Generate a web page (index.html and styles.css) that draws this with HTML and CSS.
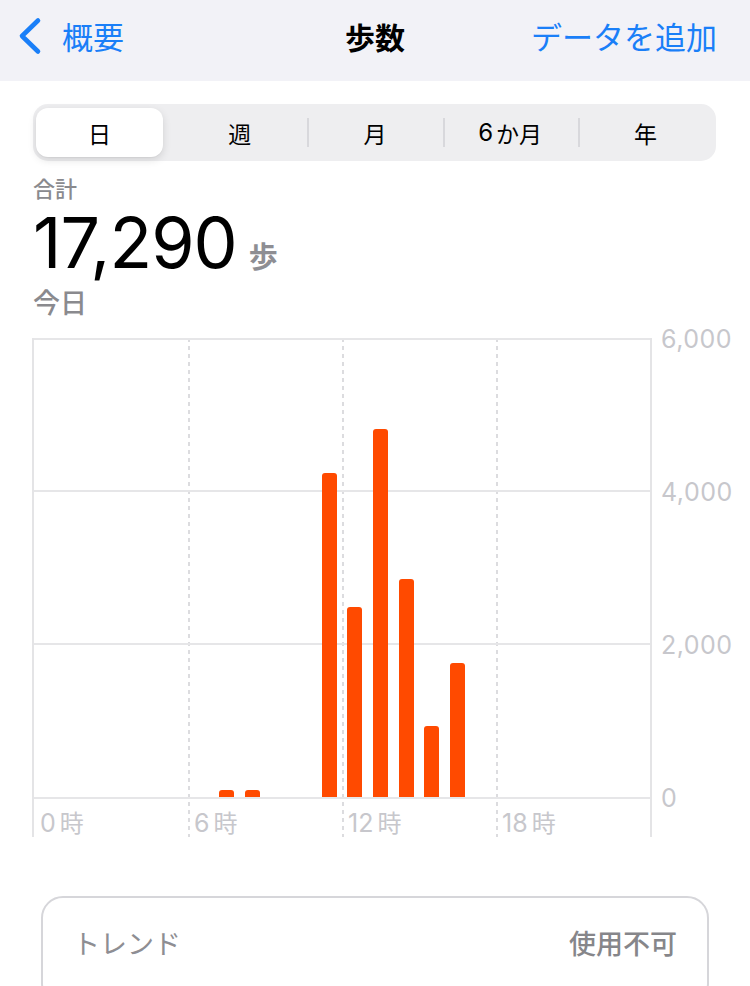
FILE: index.html
```html
<!DOCTYPE html>
<html lang="ja">
<head>
    <meta charset="UTF-8">
    <meta name="viewport" content="width=device-width, initial-scale=1.0">
    <title>歩数</title>
    <link rel="stylesheet" href="styles.css">
</head>
<body>

    <div class="nav">
        <div class="nav_back">
            <svg class="chevron" viewBox="0 0 24 38" width="24" height="38">
                <polyline points="20,3.5 4,19 20,34.5" fill="none" stroke="#1a7ff8" stroke-width="4.6" stroke-linecap="round" stroke-linejoin="round"/>
            </svg>
            <span>概要</span>
        </div>
        <div class="nav_title">歩数</div>
        <div class="nav_add">データを追加</div>
    </div>

    <div class="content">
        <div class="segment">
            <div class="seg_item active">日</div>
            <div class="seg_item">週</div>
            <div class="seg_item sep">月</div>
            <div class="seg_item sep"><span class="seg_num">6</span>か月</div>
            <div class="seg_item sep">年</div>
        </div>

        <div class="summary">
            <div class="label">合計</div>
            <div class="total"><span class="num">17,290</span><span class="unit">歩</span></div>
            <div class="date">今日</div>
        </div>

        <div class="chart">
            <div class="plot">
                <!-- 0時〜5時 -->
                <div class="quarter">
                    <div class="hours">
                        <div class="slot"></div><div class="slot"></div><div class="slot"></div>
                        <div class="slot"></div><div class="slot"></div><div class="slot"></div>
                    </div>
                    <div class="xlabel"><span class="xnum">0</span>時</div>
                </div>
                <!-- 6時〜11時 -->
                <div class="quarter">
                    <div class="hours">
                        <div class="slot"></div>
                        <div class="slot"><div class="bar" style="height:7px"></div></div>
                        <div class="slot"><div class="bar" style="height:7px"></div></div>
                        <div class="slot"></div>
                        <div class="slot"></div>
                        <div class="slot"><div class="bar" style="height:324px"></div></div>
                    </div>
                    <div class="xlabel"><span class="xnum">6</span>時</div>
                </div>
                <!-- 12時〜17時 -->
                <div class="quarter">
                    <div class="hours">
                        <div class="slot"><div class="bar" style="height:190px"></div></div>
                        <div class="slot"><div class="bar" style="height:368px"></div></div>
                        <div class="slot"><div class="bar" style="height:218px"></div></div>
                        <div class="slot"><div class="bar" style="height:71px"></div></div>
                        <div class="slot"><div class="bar" style="height:134px"></div></div>
                        <div class="slot"></div>
                    </div>
                    <div class="xlabel"><span class="xnum">12</span>時</div>
                </div>
                <!-- 18時〜23時 -->
                <div class="quarter">
                    <div class="hours">
                        <div class="slot"></div><div class="slot"></div><div class="slot"></div>
                        <div class="slot"></div><div class="slot"></div><div class="slot"></div>
                    </div>
                    <div class="xlabel"><span class="xnum">18</span>時</div>
                </div>
            </div>
            <div class="yaxis">
                <div>6,000</div>
                <div>4,000</div>
                <div>2,000</div>
                <div>0</div>
            </div>
        </div>

        <div class="trend">
            <span class="trend_name">トレンド</span>
            <span class="trend_value">使用不可</span>
        </div>
    </div>

</body>
</html>
```

FILE: styles.css
```css
/* 共通設定 */
*{
    box-sizing: border-box;
}
body{
    margin: 0;
    background-color: #ffffff;
    font-family: "Noto Sans CJK JP", "Noto Sans", sans-serif;
    color: #000000;
    overflow: hidden;
}

/* ナビゲーションバー */
.nav{
    display: grid;
    grid-template-columns: 1fr auto 1fr;
    align-items: center;
    height: 81px;
    padding: 0 33px 10px 33px;
    background-color: #f2f2f7;
    font-size: 31px;
    line-height: 1;
}
.nav_back{
    display: flex;
    align-items: center;
    margin: 0 0 0 -15px;
    color: #1a7ff8;
}
.chevron{
    margin: 0 20px 0 0;
}
.nav_title{
    font-size: 30px;
    font-weight: 700;
}
.nav_add{
    justify-self: end;
    color: #1a7ff8;
}

.content{
    padding: 0 34px 0 33px;
}

/* セグメント */
.segment{
    display: flex;
    height: 57px;
    margin: 23px 0 0 0;
    padding: 4px 3px;
    background-color: #eeeef0;
    border-radius: 15px;
}
.seg_item{
    flex: 1;
    display: flex;
    justify-content: center;
    align-items: center;
    font-size: 23px;
    position: relative;
}
.seg_num{
    margin: 0 3px 0 0;
    font-family: "Inter", "Noto Sans", sans-serif;
    font-size: 24px;
}
.seg_item.active{
    flex: 0 0 127px;
    margin: 0 9px 0 0;
    background-color: #ffffff;
    border-radius: 12px;
    box-shadow: 0 3px 8px rgba(0, 0, 0, 0.12), 0 1px 1px rgba(0, 0, 0, 0.04);
}
.seg_item.sep::before{
    content: "";
    position: absolute;
    left: 0;
    top: 10px;
    bottom: 10px;
    width: 2px;
    background-color: #d8d8dc;
}

/* 合計 */
.summary{
    margin: 12px 0 0 0;
}
.label{
    font-size: 22px;
    line-height: 28px;
    font-weight: 500;
    color: #8a8a8e;
}
.total{
    display: flex;
    align-items: baseline;
    height: 84px;
}
.num{
    font-family: "Inter", "Noto Sans", sans-serif;
    font-size: 70px;
    line-height: 84px;
    letter-spacing: -1px;
}
.unit{
    margin: 0 0 0 12px;
    font-size: 29px;
    font-weight: 700;
    color: #8e8e93;
}
.date{
    font-size: 27px;
    line-height: 34px;
    font-weight: 500;
    color: #8a8a8e;
}

/* グラフ */
.chart{
    display: flex;
    margin: 19px 0 0 -1px;
}
.plot{
    display: flex;
    flex: 0 0 620px;
    border-left: 2px solid #e4e4e6;
    border-right: 2px solid #e4e4e6;
}
.quarter{
    flex: 1;
    display: flex;
    flex-direction: column;
}
.quarter + .quarter{
    /* 6時・12時・18時の破線 */
    background: linear-gradient(to bottom, #dcdcdf 55%, transparent 0) left top / 2px 8px repeat-y;
}
.hours{
    display: flex;
    align-items: flex-end;
    height: 461px;
    padding: 0 0 2px 0;
    background:
        linear-gradient(#e6e6e8, #e6e6e8) 0 0 / 100% 2px no-repeat,
        linear-gradient(#e6e6e8, #e6e6e8) 0 152px / 100% 2px no-repeat,
        linear-gradient(#e6e6e8, #e6e6e8) 0 305px / 100% 2px no-repeat,
        linear-gradient(#e6e6e8, #e6e6e8) 0 459px / 100% 2px no-repeat;
}
.slot{
    flex: 1;
    display: flex;
    justify-content: center;
}
.bar{
    width: 15px;
    background-color: #ff4a00;
    border-radius: 3px 3px 0 0;
}
.xlabel{
    height: 38px;
    padding: 8px 0 0 6px;
    font-size: 24px;
    line-height: 30px;
    color: #c7c7cc;
}
.xnum{
    margin: 0 4px 0 0;
    font-family: "Inter", "Noto Sans", sans-serif;
    font-size: 25px;
}
.yaxis{
    flex: 0 0 auto;
    display: flex;
    flex-direction: column;
    gap: 123px;
    margin: -14px 0 0 9px;
    font-family: "Inter", "Noto Sans", sans-serif;
    font-size: 25px;
    line-height: 30px;
    letter-spacing: 0.5px;
    color: #c7c7cc;
}

/* トレンド */
.trend{
    display: flex;
    justify-content: space-between;
    align-items: center;
    height: 110px;
    margin: 59px 7px 0 8px;
    padding: 0 30px 18px 30px;
    border: 2px solid #d6d6da;
    border-radius: 22px;
    font-size: 27px;
}
.trend_name{
    color: #8e8e93;
}
.trend_value{
    font-weight: 500;
    color: #86868a;
}
```
